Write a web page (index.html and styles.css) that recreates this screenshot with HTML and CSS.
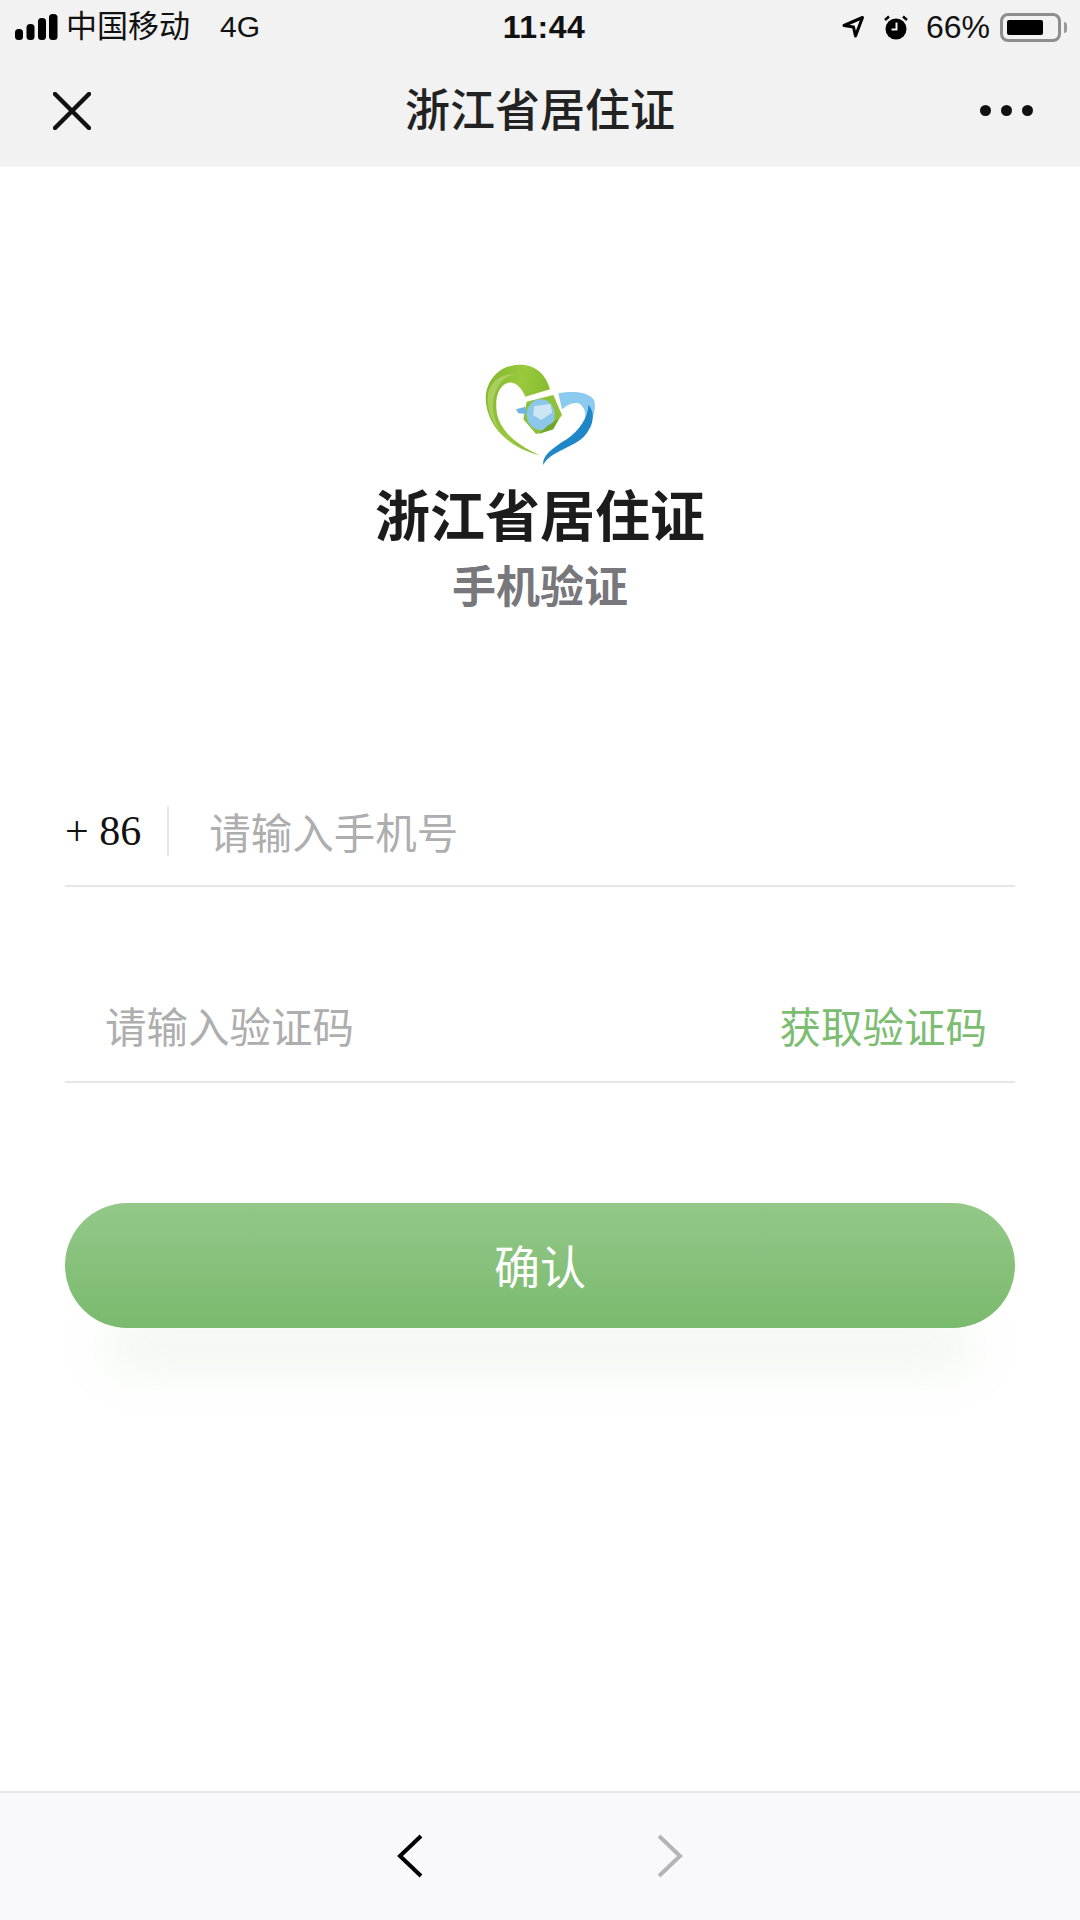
FILE: index.html
```html
<!doctype html>
<html>
<head>
    <meta charset="utf-8">
    <title>浙江省居住证</title>
    <link rel="stylesheet" href="styles.css">
</head>

<body>
<div class="page">
    <div class="topbar">
        <div class="status">
            <div class="status-left">
                <svg class="signal" width="43" height="26" viewBox="0 0 43 26">
                    <rect x="0" y="15" width="8" height="11" rx="3.5"/>
                    <rect x="11.500" y="10" width="8" height="16" rx="3.5"/>
                    <rect x="23" y="4" width="8" height="22" rx="3.5"/>
                    <rect x="34" y="0" width="8.500" height="26" rx="3.5"/>
                </svg>
                <span class="carrier">中国移动</span>
                <span class="net">4G</span>
            </div>
            <div class="clock">11:44</div>
            <div class="status-right">
                <svg class="locate" width="24" height="24" viewBox="0 0 24 24">
                    <path d="M3 10.500 L21.500 2.500 L14.500 21 L12.500 12 Z" fill="none" stroke="#000" stroke-width="3" stroke-linejoin="round"/>
                </svg>
                <svg class="alarm" width="24" height="25" viewBox="0 0 24 25">
                    <circle cx="12" cy="14" r="10.500"/>
                    <path d="M1 5 L5 1.500 M23 5 L19 1.500" stroke="#000" stroke-width="2.500" fill="none"/>
                    <path d="M12.500 7.500 V14.500 H7.500" stroke="#f2f2f2" stroke-width="2" fill="none"/>
                </svg>
                <span class="percent">66%</span>
                <div class="battery"><div class="battery-level"></div></div>
                <div class="battery-nib"></div>
            </div>
        </div>
        <div class="nav">
            <svg class="nav-close" width="38" height="38" viewBox="0 0 38 38">
                <path d="M2 2 L36 36 M36 2 L2 36" stroke="#111" stroke-width="4.500" stroke-linecap="round"/>
            </svg>
            <div class="nav-title">浙江省居住证</div>
            <div class="nav-more"><i></i><i></i><i></i></div>
        </div>
    </div>

    <div class="main">
        <svg class="logo" width="160" height="120" viewBox="0 0 480 360">
            <defs>
                <linearGradient id="leaf" x1="0" y1="0" x2="1" y2="0.300">
                    <stop offset="0" stop-color="#7fb52c"/>
                    <stop offset="0.550" stop-color="#9ac93c"/>
                    <stop offset="1" stop-color="#86bc30"/>
                </linearGradient>
            </defs>
            <path fill="url(#leaf)" d="M240 316 C170 300 90 250 78 160 C72 100 110 48 175 44 C225 42 258 72 270 118 L196 140 C185 112 165 94 145 98 C118 104 104 140 110 185 C118 245 180 290 240 316 Z"/>
            <path fill="#a8cf5e" d="M84 130 C95 90 125 70 165 74 C130 80 110 105 100 150 C95 180 105 220 125 250 C95 215 78 175 84 130 Z"/>
            <path fill="#8ccbef" d="M295 130 C340 122 385 125 402 150 C412 180 395 225 360 255 C380 215 385 175 355 160 C340 155 320 165 306 178 Z"/>
            <path fill="#1f86c8" d="M250 345 C245 320 275 295 320 268 C360 240 385 200 385 165 C405 185 405 225 370 262 C335 295 270 305 250 345 Z"/>
            <path fill="#8fc03a" d="M200 155 L280 135 L306 195 L272 240 L228 252 L190 208 Z"/>
            <ellipse cx="242" cy="194" rx="42" ry="46" fill="#8cc6ea"/>
            <path fill="#cde6f5" d="M222 168 L272 162 L276 188 L244 210 L220 196 Z"/>
            <path fill="#6fb4de" d="M168 178 L196 170 L200 192 L175 190 Z"/>
            <path fill="#6fa82a" d="M262 228 L298 205 L280 238 L236 252 Z"/>
        </svg>
        <h1 class="brand">浙江省居住证</h1>
        <div class="subtitle">手机验证</div>

        <div class="form">
            <div class="field field-phone">
                <span class="prefix">+ 86</span>
                <span class="divider"></span>
                <span class="placeholder">请输入手机号</span>
            </div>
            <div class="field field-code">
                <span class="placeholder">请输入验证码</span>
                <span class="get-code">获取验证码</span>
            </div>
            <div class="confirm">确认</div>
        </div>
    </div>

    <div class="toolbar">
        <svg width="26" height="44" viewBox="0 0 26 44">
            <path d="M24 2 L3 22 L24 42" fill="none" stroke="#000" stroke-width="4"/>
        </svg>
        <svg width="26" height="44" viewBox="0 0 26 44">
            <path d="M2 2 L23 22 L2 42" fill="none" stroke="#b5b5b5" stroke-width="4"/>
        </svg>
    </div>
</div>
</body>
</html>
```

FILE: styles.css
```css
* {
    box-sizing: border-box;
}

body {
    margin: 0;
    background: #fff;
    font-family: "Liberation Sans", "Noto Sans CJK SC", sans-serif;
}

.page {
    width: 1080px;
    height: 1920px;
    display: flex;
    flex-direction: column;
}

/* top grey area */
.topbar {
    height: 167px;
    background: #f2f2f2;
}

.status {
    height: 54px;
    padding: 0 13px 0 15px;
    display: grid;
    grid-template-columns: 1fr auto 1fr;
    align-items: center;
    font-size: 32px;
    color: #111;
}

.status-left {
    display: flex;
    align-items: center;
}

.signal {
    margin-right: 8px;
}

.carrier {
    font-size: 31px;
    line-height: 36px;
}

.net {
    margin-left: 30px;
    font-size: 30px;
}

.clock {
    margin-left: 6px;
    font-weight: bold;
    letter-spacing: 0.500px;
}

.status-right {
    display: flex;
    align-items: center;
    justify-content: flex-end;
}

.locate {
    margin-right: 19px;
}

.alarm {
    margin-right: 18px;
}

.percent {
    margin-right: 10px;
}

.battery {
    width: 61px;
    height: 29px;
    padding: 4px;
    border: 3px solid #8e8e8e;
    border-radius: 8px;
}

.battery-level {
    width: 36px;
    height: 100%;
    background: #000;
    border-radius: 2px;
}

.battery-nib {
    width: 3px;
    height: 11px;
    margin-left: 3px;
    background: #9a9a9a;
    border-radius: 0 3px 3px 0;
}

.nav {
    height: 113px;
    padding: 0 53px;
    display: grid;
    grid-template-columns: 1fr auto 1fr;
    align-items: center;
}

.nav-title {
    padding-bottom: 6px;
    font-size: 45px;
    font-weight: 500;
    color: #222;
}

.nav-more {
    margin-right: -6px;
    display: flex;
    justify-content: flex-end;
    gap: 10px;
}

.nav-more i {
    width: 11px;
    height: 11px;
    background: #111;
    border-radius: 50%;
}

/* login form */
.main {
    flex: 1;
    padding-top: 183px;
    display: flex;
    flex-direction: column;
    align-items: center;
}

.logo {
    filter: blur(0.6px);
}

.brand {
    margin: 15px 0 0;
    font-size: 55px;
    line-height: 64px;
    font-weight: bold;
    color: #1c1c1c;
}

.subtitle {
    margin-top: 9px;
    font-size: 44px;
    line-height: 60px;
    font-weight: bold;
    color: #77777c;
}

.form {
    width: 950px;
    margin-top: 159px;
}

.field {
    height: 110px;
    display: flex;
    align-items: center;
    border-bottom: 2px solid #e6e6e6;
    font-size: 41.500px;
}

.field-code {
    margin-top: 86px;
    padding: 0 28px 4px 40px;
    justify-content: space-between;
}

.prefix {
    font-family: "Liberation Serif", serif;
    font-size: 42px;
    color: #111;
}

.divider {
    width: 2px;
    height: 50px;
    margin: 0 40px 0 26px;
    background: #e8e8e8;
}

.placeholder {
    color: #aeaeae;
}

.get-code {
    color: #7dbd72;
}

.confirm {
    height: 125px;
    margin-top: 120px;
    padding-bottom: 4px;
    display: flex;
    align-items: center;
    justify-content: center;
    background: linear-gradient(#93c888, #7aba6e);
    border-radius: 63px;
    box-shadow: 0 80px 50px -40px rgba(125, 189, 114, 0.13);
    color: #fff;
    font-size: 46px;
}

/* bottom bar */
.toolbar {
    height: 129px;
    padding-bottom: 2px;
    display: flex;
    align-items: center;
    justify-content: center;
    gap: 234px;
    background: #f9f9fb;
    border-top: 2px solid #e6e6e6;
}
```
